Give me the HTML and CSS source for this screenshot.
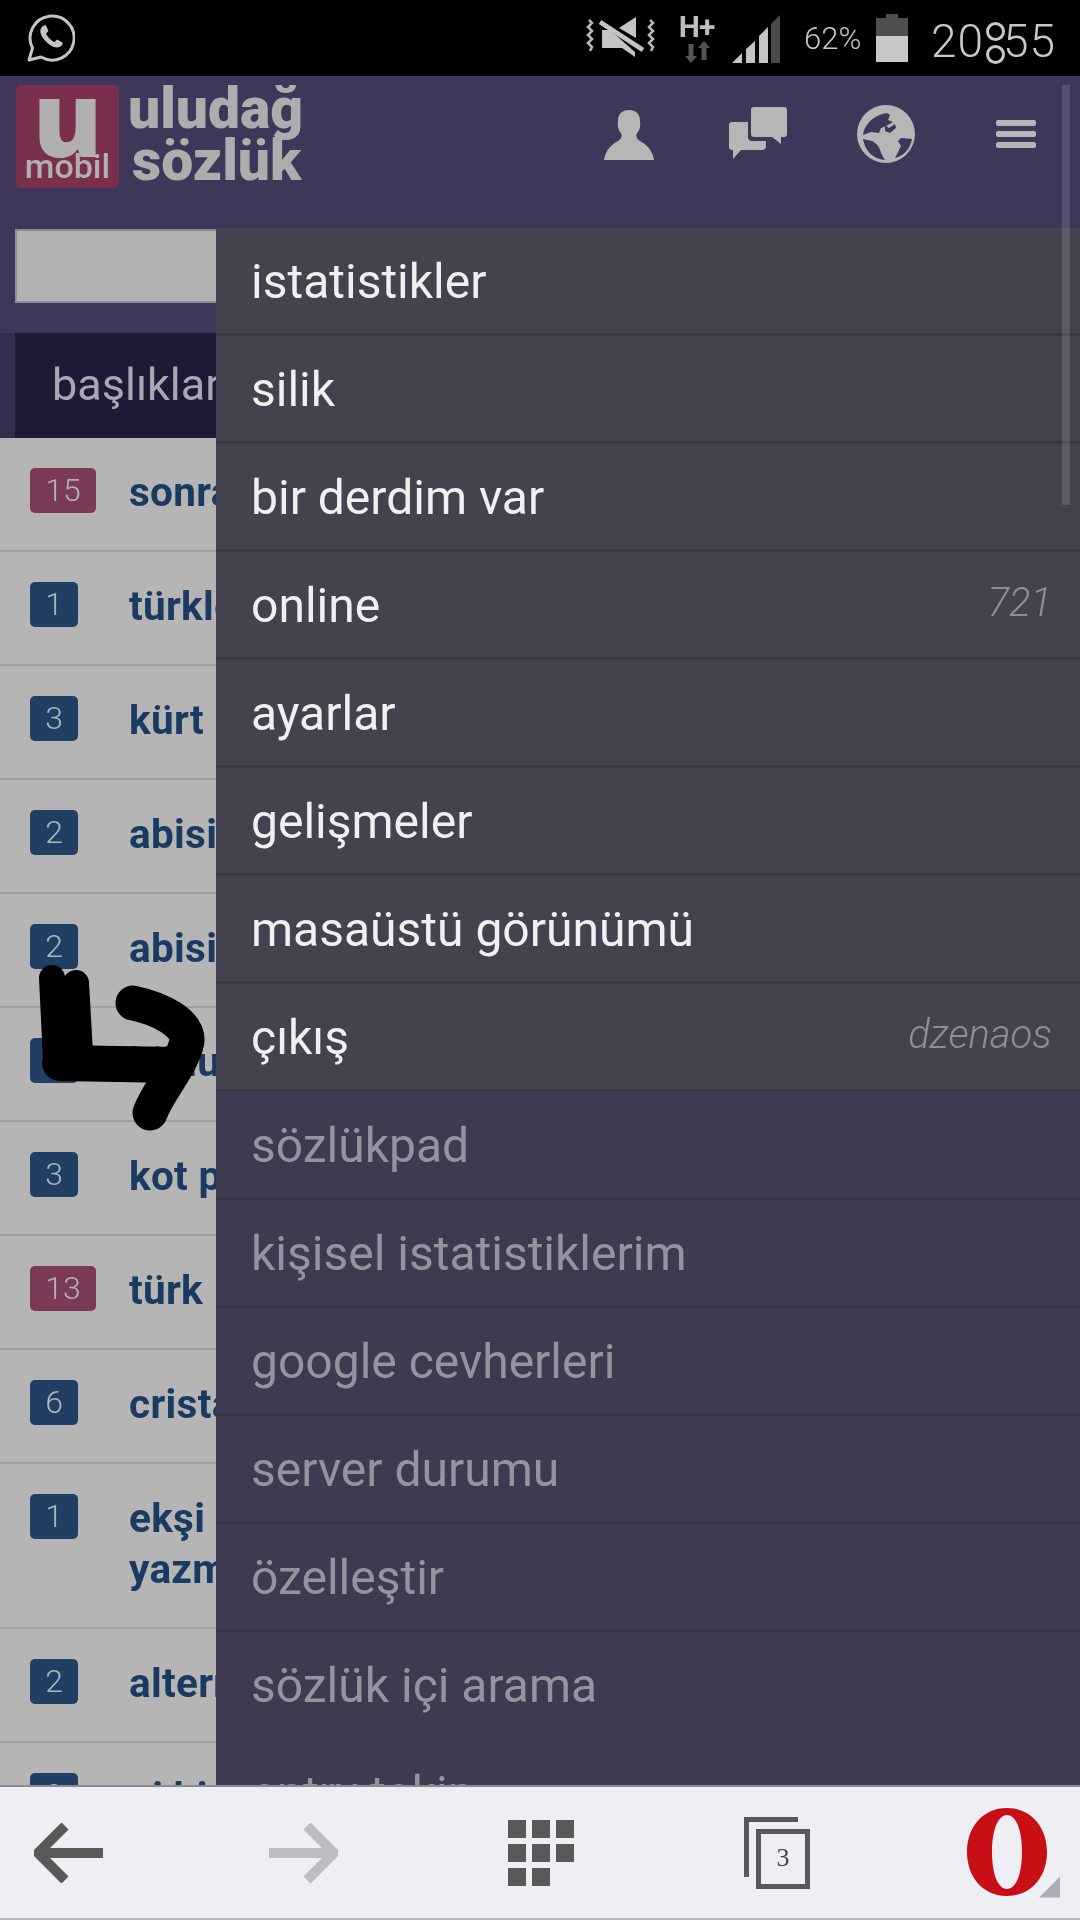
FILE: index.html
```html
<!DOCTYPE html>
<html lang="tr">
<head>
<meta charset="utf-8">
<title>uludağ sözlük</title>
<link rel="stylesheet" href="styles.css">
</head>
<body>
<div class="screen">
  <div class="statusbar">
    <svg class="ic-wa" width="48" height="48" viewBox="0 0 48 48" fill="none" stroke="#c4c4c4" stroke-width="3"><path d="M2 46l3.500-12A22 22 0 1 1 14 43z" stroke-linejoin="round"/><path d="M15 13c-3 3-2 8 3 13.500s10 8 14.500 6.500c2.500-1 3.500-3 3-4.500l-5.500-3-2.500 2.500c-3-1-7-5-8.500-8.500l2.500-2.500-2.500-5.500c-1.500-.5-3 .5-4 1.500z" fill="#c4c4c4" stroke="none"/></svg>
    <div class="status-right">
      <svg class="ic-mute" width="70" height="46" viewBox="0 0 70 46" fill="none"><path d="M3 5l3 3-4 4 4 4-4 4 4 4-4 4 4 4-2 4M64 5l3 3-4 4 4 4-4 4 4 4-4 4 4 4-2 4" stroke="#b8b8b8" stroke-width="2.500"/><path d="M16 15h8l25 22v5L36 33H16z" fill="#c4c4c4"/><path d="M33 13L50 2v21z" fill="#c4c4c4"/><path d="M14 7l43 28" stroke="#c4c4c4" stroke-width="4.500"/></svg>
      <div class="net">
        <span class="net-h">H+</span>
        <svg width="26" height="22" viewBox="0 0 26 22"><path d="M7 22l-6-7h3.500V3h5v12H13zM20 0l6 7h-3.500v12h-5V7H14z" fill="#555"/></svg>
      </div>
      <svg class="ic-signal" width="48" height="48" viewBox="0 0 48 48"><path d="M0 48l10-10v10zM14 48V34l9-8v22zM27 48V21l9-9v36z" fill="#c4c4c4"/><path d="M39 48V9l9-9v48z" fill="#4a4a4a"/></svg>
      <span class="pct">62%</span>
      <svg class="ic-batt" width="32" height="48" viewBox="0 0 32 48"><path d="M0 4h10V0h12v4h10v18H0z" fill="#4e4e4e"/><path d="M0 22h32v26H0z" fill="#c8c8c8"/></svg>
      <span class="clock">20<span class="colon">:</span>55</span>
    </div>
  </div>

  <div class="app">
    <header class="topbar">
      <div class="brand">
        <div class="logo"><span class="logo-u">u</span><span class="logo-m">mobil</span></div>
        <div class="wordmark"><span>uludağ</span><span class="wm2">sözlük</span></div>
      </div>
      <nav class="top-icons">
        <svg class="ic-user" width="50" height="50" viewBox="0 0 50 50"><path d="M25 0c7 0 11 4 11 11 0 2 .5 4 0 6-.5 3-2 5-3.500 7-.5 3 .5 5 3.500 7 5 3 12 7 14 19H0c2-12 9-16 14-19 3-2 4-4 3.500-7-1.500-2-3-4-3.500-7-.5-2 0-4 0-6C14 4 18 0 25 0z" fill="#b6b6b6"/></svg>
        <svg class="ic-chat" width="58" height="52" viewBox="0 0 58 52"><path d="M25 0h30a3 3 0 0 1 3 3v24a3 3 0 0 1-3 3h-3v7l-9-7H25a3 3 0 0 1-3-3V3a3 3 0 0 1 3-3z" fill="#b6b6b6"/><path d="M3 15h16v15a4 4 0 0 0 4 4h14v5a4 4 0 0 1-4 4H12l-8 9v-9H3a3 3 0 0 1-3-3V18a3 3 0 0 1 3-3z" fill="#b6b6b6"/></svg>
        <svg class="ic-globe" width="58" height="58" viewBox="0 0 58 58"><circle cx="29" cy="29" r="29" fill="#b6b6b6"/><path d="M6 30C7 20 16 10 30 8l3 2-2 5 5 2-7 4-5 2-2 5-8-1zM6 34l9 2c7 4 8 8 9 12l4 7C16 54 8 46 6 34zM55 34l-11-1-3 3 3 5-6 12c9-2 15-9 17-19zM28 20l4 3 6-4 1 4-6 5-5-2z" fill="#3f3759"/></svg>
        <div class="burger"><i></i><i></i><i></i></div>
      </nav>
    </header>
    <div class="searchrow"><div class="search"></div></div>
    <div class="tabs"><div class="tab">başlıklar</div></div>
    <ul class="list">
      <li class="row"><span class="badge hot">15</span><span class="title">sonra ne olacak</span></li>
      <li class="row"><span class="badge">1</span><span class="title">türkler</span></li>
      <li class="row"><span class="badge">3</span><span class="title">kürt</span></li>
      <li class="row"><span class="badge">2</span><span class="title">abisi olan kız</span></li>
      <li class="row"><span class="badge">2</span><span class="title">abisi olmayan kız</span></li>
      <li class="row"><span class="badge">1</span><span class="title">bildu</span></li>
      <li class="row"><span class="badge">3</span><span class="title">kot pantolon</span></li>
      <li class="row"><span class="badge hot">13</span><span class="title">türk</span></li>
      <li class="row"><span class="badge">6</span><span class="title">cristal</span></li>
      <li class="row"><span class="badge">1</span><span class="title">ekşi<br>yazmak</span></li>
      <li class="row"><span class="badge">2</span><span class="title">alternatif</span></li>
      <li class="row"><span class="badge">2</span><span class="title">oi bir şey</span></li>
    </ul>
    <div class="scrollbar"></div>
  </div>

  <aside class="menu">
    <a class="item">istatistikler</a>
    <a class="item">silik</a>
    <a class="item">bir derdim var</a>
    <a class="item">online<em>721</em></a>
    <a class="item">ayarlar</a>
    <a class="item">gelişmeler</a>
    <a class="item">masaüstü görünümü</a>
    <a class="item">çıkış<em>dzenaos</em></a>
    <a class="item dim">sözlükpad</a>
    <a class="item dim">kişisel istatistiklerim</a>
    <a class="item dim">google cevherleri</a>
    <a class="item dim">server durumu</a>
    <a class="item dim">özelleştir</a>
    <a class="item dim tint">sözlük içi arama</a>
    <a class="item dim">entry takip</a>
  </aside>

  <svg class="scribble" width="240" height="240" viewBox="0 0 240 240" fill="none" stroke="#000" stroke-linecap="round" stroke-linejoin="round"><path d="M52 78l4 82" stroke-width="26"/><path d="M76 83l4 70" stroke-width="26"/><path d="M60 163l115 2" stroke-width="36"/><path d="M133 103c28 6 55 20 54 38-5 25-28 48-37 72" stroke-width="35"/></svg>

  <footer class="browserbar">
    <svg width="69" height="60" viewBox="0 0 69 60" fill="none" stroke="#595959" stroke-width="10"><path d="M69 30H7M31 3L4 30l27 27"/></svg>
    <svg width="69" height="60" viewBox="0 0 69 60" fill="none" stroke="#bcbdc1" stroke-width="10"><path d="M0 30h62M38 3l27 27-27 27"/></svg>
    <div class="grid"><i></i><i></i><i></i><i></i><i></i><i></i><i></i><i></i></div>
    <div class="tabs-ic"><span class="tabs-back"></span><span class="tabs-front">3</span></div>
    <div class="opera">
      <svg width="80" height="88" viewBox="0 0 80 88"><path fill-rule="evenodd" d="M40 0c24 0 40 19 40 44S64 88 40 88 0 69 0 44 16 0 40 0zm0 7c-9 0-15 15-15 37s6 37 15 37 15-15 15-37S49 7 40 7z" fill="#c80f15"/></svg>
      <span class="corner"></span>
    </div>
  </footer>
</div>
</body>
</html>
```
FILE: styles.css
```css
* { box-sizing: border-box; }
html, body { margin: 0; padding: 0; background: #000; }
.screen {
  position: relative;
  width: 1080px;
  height: 1920px;
  overflow: hidden;
  font-family: Roboto, "Liberation Sans", sans-serif;
  filter: blur(0.7px);
}

/* status bar */
.statusbar {
  height: 76px;
  background: #000;
  display: flex;
  align-items: center;
  justify-content: space-between;
  padding: 0 24px 0 27px;
  color: #c8c8c8;
}
.status-right { display: flex; align-items: center; height: 100%; }
.ic-mute { margin-right: 23px; }
.net { width: 35px; display: flex; flex-direction: column; align-items: center; margin-right: 18px; }
.net-h { font-size: 30px; font-weight: 700; line-height: 28px; letter-spacing: -1px; color: #bdbdbd; }
.ic-signal { margin-right: 24px; margin-top: 2px; }
.pct { width: 62px; font-size: 31px; font-weight: 300; white-space: nowrap; margin-right: 10px; }
.ic-batt { margin-right: 23px; }
.clock { display: flex; width: 125px; justify-content: space-between; font-size: 46px; font-weight: 300; line-height: 46px; margin-top: 6px; letter-spacing: 1px; }
.colon { position: relative; display: block; width: 15px; color: transparent; letter-spacing: 0; }
.colon::before, .colon::after {
  content: "";
  position: absolute;
  left: 0;
  width: 13px;
  height: 13px;
  border: 3px solid #c8c8c8;
  border-radius: 50%;
}
.colon::before { top: 4px; }
.colon::after { top: 27px; }

/* app */
.app { background: #3f3759; position: relative; }
.topbar {
  height: 152px;
  display: flex;
  justify-content: space-between;
  align-items: flex-start;
  padding: 9px 44px 0 16px;
}
.brand { display: flex; gap: 9px; }
.logo {
  width: 103px;
  height: 103px;
  background: #7a2f4c;
  border-radius: 5px;
  display: flex;
  flex-direction: column;
  align-items: center;
  color: #b0b0b0;
  font-family: "Open Sans", sans-serif;
  font-weight: 800;
}
.logo-u { font-size: 104px; line-height: 64px; height: 64px; }
.logo-m { font-family: Roboto, sans-serif; font-weight: 500; font-size: 34px; line-height: 34px; }
.wordmark {
  display: flex;
  flex-direction: column;
  color: #adadad;
  font-weight: 900;
  font-size: 57px;
  line-height: 52px;
  margin-top: -2px;
}
.wm2 { margin-left: 4px; }
.top-icons { display: flex; align-items: flex-start; padding-top: 20px; }
.ic-user { margin-top: 5px; margin-right: 75px; }
.ic-chat { margin-top: 2px; margin-right: 70px; }
.ic-globe { margin-right: 81px; }
.burger { width: 40px; display: flex; flex-direction: column; gap: 5px; margin-top: 15px; }
.burger i { display: block; height: 6px; background: #b6b6b6; border-radius: 2px; }
.searchrow { height: 105px; padding: 1px 0 0 15px; }
.search { width: 400px; height: 74px; background: #b1b1b1; border: 2px solid #8e8d94; }
.tabs { height: 105px; padding-left: 15px; background: #342d4d; }
.tab {
  height: 105px;
  width: 400px;
  padding: 24px 0 0 37px;
  background: #1d1936;
  color: #a9a8b2;
  font-size: 45px;
  line-height: 56px;
}
.list { list-style: none; margin: 0; padding: 0; background: #b5b5b5; height: 1500px; overflow: hidden; }
.row { display: flex; padding: 27px 0 32px 30px; border-bottom: 2px solid #a0a0a0; white-space: nowrap; }
.badge {
  min-width: 48px;
  height: 45px;
  margin-top: 3px;
  padding: 0 8px;
  border-radius: 5px;
  background: #213f63;
  color: #aeb4bb;
  font-size: 32px;
  font-weight: 300;
  line-height: 45px;
  text-align: center;
}
.badge.hot { min-width: 66px; background: #7b3a58; }
.title {
  margin-left: 51px;
  padding-top: 2px;
  color: #1b3a62;
  font-size: 40.5px;
  font-weight: 700;
  letter-spacing: 0.3px;
  line-height: 51px;
}
.row .badge.hot + .title { margin-left: 33px; }
.scrollbar {
  position: absolute;
  top: 9px;
  right: 10px;
  width: 8px;
  height: 420px;
  background: rgba(255, 255, 255, 0.12);
  z-index: 5;
}

/* slide-in menu */
.menu {
  position: absolute;
  left: 216px;
  right: 0;
  top: 228px;
  height: 1560px;
  overflow: hidden;
  background: #3e3a4f;
}
.item {
  display: flex;
  justify-content: space-between;
  height: 108px;
  padding: 27px 28px 0 35px;
  background: #45424f;
  border-bottom: 3px solid #3a3843;
  color: #f0f0f2;
  font-size: 48px;
  line-height: 54px;
}
.item em { font-size: 40px; margin-top: -3px; color: #8f8d98; font-style: italic; font-weight: 300; }
.item.dim { background: #3e3a4f; border-bottom-color: #373447; color: #96939f; }
.item.tint { border-bottom-color: #433649; }

/* drawn-on arrow */
.scribble { position: absolute; left: 0; top: 900px; }

/* browser bar */
.browserbar {
  position: absolute;
  left: 0;
  right: 0;
  top: 1785px;
  height: 135px;
  background: #edeff4;
  border-top: 2px solid #8a8a90;
  border-bottom: 2px solid #b5b6ba;
  display: flex;
  align-items: center;
  padding: 0 20px 0 34px;
}
.browserbar svg { flex: none; }
.browserbar > svg:nth-child(2) { margin-left: 166px; }
.grid {
  display: grid;
  grid-template-columns: repeat(3, 18px);
  grid-template-rows: repeat(3, 18px);
  gap: 6px;
  margin-left: 170px;
}
.grid i { background: #595959; }
.tabs-ic { position: relative; width: 66px; height: 72px; margin-left: 170px; }
.tabs-back {
  position: absolute;
  left: 0;
  top: 0;
  width: 54px;
  height: 60px;
  border: 5px solid #595959;
  border-right: 0;
  border-bottom: 0;
}
.tabs-front {
  position: absolute;
  left: 12px;
  top: 12px;
  width: 54px;
  height: 60px;
  border: 5px solid #595959;
  background: #edeff4;
  color: #444;
  font-family: "Liberation Serif", serif;
  font-size: 26px;
  line-height: 48px;
  text-align: center;
  outline: 2px solid #edeff4;
}
.opera { position: relative; margin-left: auto; width: 93px; height: 90px; }
.corner {
  position: absolute;
  right: 0;
  bottom: 0;
  width: 21px;
  height: 21px;
  background: #abaeb9;
  clip-path: polygon(100% 0, 100% 100%, 0 100%);
}
```
